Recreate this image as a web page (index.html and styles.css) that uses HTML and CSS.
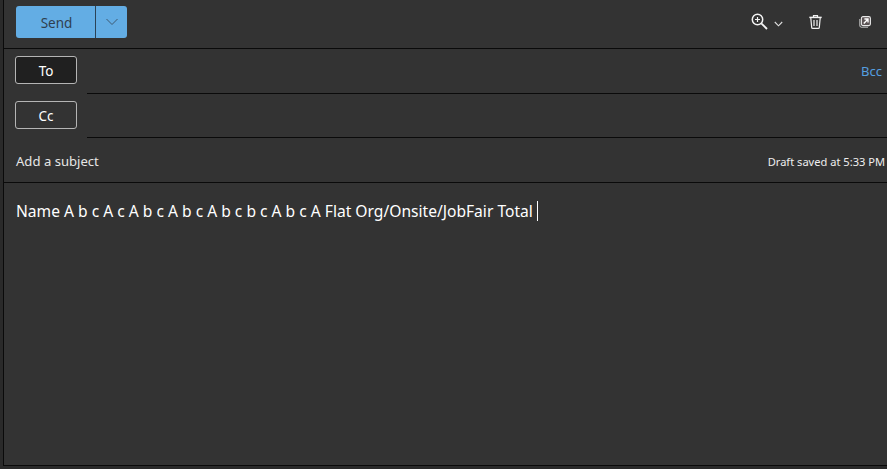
FILE: index.html
```html
<!DOCTYPE html>
<html lang="en">
<head>
<meta charset="UTF-8" />
<meta name="viewport" content="width=device-width, initial-scale=1" />
<title>New message</title>
<link rel="stylesheet" href="styles.css">
</head>
<body>
<main class="compose">
    <div class="toolbar">
        <div class="send-group">
            <button class="send-btn">Send</button>
            <button class="send-more" aria-label="More send options">
                <svg width="14" height="8" viewBox="0 0 14 8"><path d="M1.5 1 7 6.5 12.5 1" fill="none" stroke="#3f5870" stroke-width="1"/></svg>
            </button>
        </div>
        <div class="tools">
            <button class="tool tool-zoom" aria-label="Zoom">
                <svg width="17" height="17" viewBox="0 0 17 17" fill="none" stroke="#f4f4f4">
                    <circle cx="6.5" cy="6.5" r="5.2" stroke-width="1.5"/>
                    <path d="M10.3 10.3 16 16" stroke-width="1.8"/>
                    <path d="M4 6.5h5M6.5 4v5" stroke-width="1.2"/>
                </svg>
                <svg width="9" height="6" viewBox="0 0 9 6"><path d="M.8 1 4.5 4.8 8.2 1" fill="none" stroke="#e0e0e0" stroke-width="1.1"/></svg>
            </button>
            <button class="tool tool-trash" aria-label="Discard">
                <svg width="13" height="14" viewBox="0 0 13 14" fill="none" stroke="#f0f0f0" stroke-width="1.2">
                    <path d="M.3 2.4h12.4" stroke-width="1.5"/>
                    <path d="M4.5 2V.7h4V2M1.8 3l.9 9.4c0 .6.5 1 1.1 1h5.4c.6 0 1.1-.4 1.1-1l.9-9.4"/>
                    <path d="M5 5v6M8 5v6"/>
                </svg>
            </button>
            <button class="tool tool-popout" aria-label="Open in new window">
                <svg width="12" height="12" viewBox="0 0 12 12" fill="none">
                    <rect x="2.4" y=".6" width="9" height="9" rx="1.6" fill="#5c5455" stroke="#e8e8e8" stroke-width="1.1"/>
                    <path d="M.8 3v6.6c0 .9.7 1.6 1.6 1.6H9" stroke="#b9b9b9" stroke-width="1.1"/>
                    <path d="M4.8 7.4 8.6 3.4M5.4 3h3.6v3.6" stroke="#fff" stroke-width="1.4"/>
                </svg>
            </button>
        </div>
    </div>

    <div class="recipient recipient-to">
        <button class="recipient-btn recipient-btn-active">To</button>
        <div class="recipient-field"><a class="bcc" href="#">Bcc</a></div>
    </div>
    <div class="recipient recipient-cc">
        <button class="recipient-btn">Cc</button>
        <div class="recipient-field"></div>
    </div>

    <div class="subject-row">
        <span class="subject">Add a subject</span>
        <span class="draft-status">Draft saved at 5:33 PM</span>
    </div>

    <div class="body-text">
        <span>Name A b c A c A b c A b c A b c b c A b c A Flat Org/Onsite/JobFair Total</span><span class="caret"></span>
    </div>
</main>
</body>
</html>
```

FILE: styles.css
```css
* {
    box-sizing: border-box;
}
html, body {
    height: 100%;
}
body {
    margin: 0;
    background: #2a2a2a;
    font-family: "Noto Sans", "Open Sans", Arial, sans-serif;
    color: #f5f5f5;
    overflow: hidden;
}
button {
    font: inherit;
    color: inherit;
    background: none;
    border: none;
    padding: 0;
}
.compose {
    margin-left: 3px;
    height: 466px;
    background: #333333;
    border-left: 1px solid #0a0a0a;
    border-bottom: 1px solid #0a0a0a;
    display: flex;
    flex-direction: column;
}
.toolbar {
    height: 49px;
    flex: none;
    display: flex;
    justify-content: space-between;
    border-bottom: 1px solid #0a0a0a;
    padding: 6px 0 0 12px;
}
.send-group {
    display: flex;
    height: 32px;
    width: 111px;
    border-radius: 3px;
    overflow: hidden;
    background: #63ade4;
    color: #2f3f4f;
}
.send-btn {
    width: 80px;
    padding: 2px 0 0 2px;
    font-size: 13.5px;
    border-right: 1px solid #2b4256;
}
.send-more {
    flex: 1;
    display: flex;
    align-items: center;
    justify-content: center;
}
.tools {
    display: flex;
    align-items: flex-start;
    padding-top: 7px;
}
.tool {
    display: flex;
    align-items: center;
}
.tool-zoom {
    gap: 6px;
    margin-right: 26px;
}
.tool-zoom svg:last-child {
    margin-top: 5px;
}
.tool-trash {
    margin-top: 2px;
    margin-right: 37px;
}
.tool-popout {
    margin-top: 3px;
    margin-right: 16px;
}
.recipient {
    display: flex;
    flex: none;
    padding-left: 11px;
}
.recipient-to {
    height: 45px;
    padding-top: 7px;
}
.recipient-cc {
    height: 44px;
    padding-top: 7px;
}
.recipient-btn {
    width: 62px;
    height: 28px;
    border: 1px solid #b5b5b5;
    border-radius: 3px;
    padding-top: 1px;
    font-size: 13.5px;
    color: #fff;
    flex: none;
}
.recipient-btn-active {
    background: #202020;
}
.recipient-field {
    flex: 1;
    margin: -7px 0 0 10px;
    border-bottom: 1px solid #0a0a0a;
    display: flex;
    justify-content: flex-end;
    align-items: center;
    padding-right: 5px;
}
.bcc {
    color: #559fe0;
    font-size: 13px;
    text-decoration: none;
}
.subject-row {
    height: 45px;
    flex: none;
    display: flex;
    justify-content: space-between;
    align-items: center;
    padding: 2px 2px 0 12px;
    border-bottom: 1px solid #0a0a0a;
}
.subject {
    font-size: 13.1px;
    color: #e6e6e6;
}
.draft-status {
    font-size: 11.1px;
    color: #eeeeee;
}
.body-text {
    padding: 18px 0 0 12px;
    font-size: 15.6px;
    line-height: 20px;
    color: #ffffff;
    display: flex;
    align-items: flex-start;
}
.caret {
    width: 1px;
    height: 20px;
    margin-left: 4px;
    background: #ffffff;
}
```
